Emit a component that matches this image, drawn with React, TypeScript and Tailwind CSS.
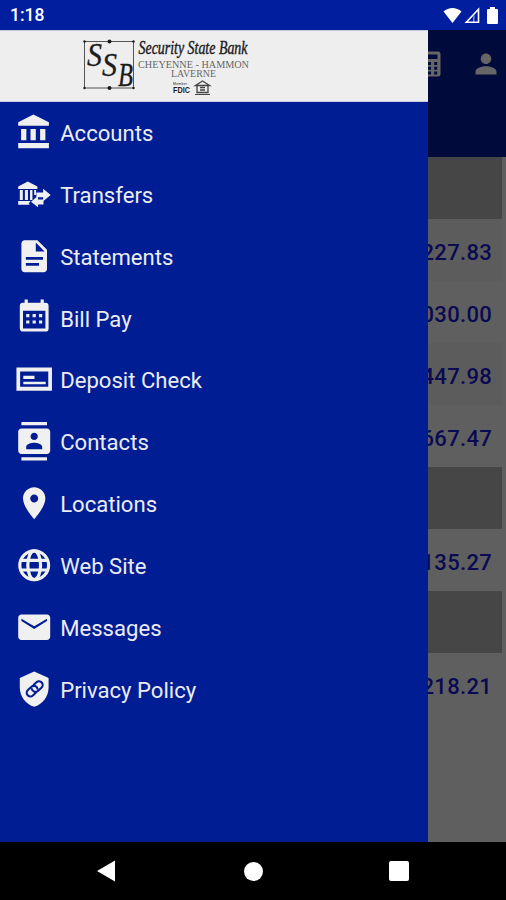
import React from 'react';

const icons: Record<string, React.ReactNode> = {
  accounts: (
    <path d="M3.800 10v7h3.300v-7H3.800zm5.900 0v7h3.300v-7H9.700zM2 22h19.200v-3.200H2V22zm13.700-12v7H19v-7h-3.300zM11.500 1L2 5.800V8h19.200V5.800L11.500 1z" />
  ),
  transfers: (
    <>
      <path d="M8 4L2 7.200v1.500h12V7.200L8 4zM3 9.300v6.400h1.900V9.300zM6.200 9.300v6.400h1.900V9.300zM9.400 9.300v6.400h1.500V9.300zM12 9.300v3.200h1.200V9.300zM2 16.200v2.400h7.200l-.6-.9 1.200-1.500z" />
      <path d="M17.600 8.600l4.700 3.900-4.700 3.900v-2.500h-4.200V11h4.200z" />
      <path d="M14.400 13v2.300h3.400v3.200h-3.400v1.700L10 16.800z" />
    </>
  ),
  statements: (
    <path d="M14 2H6c-1.100 0-1.990.9-1.990 2L4 20c0 1.100.89 2 1.990 2H18c1.100 0 2-.9 2-2V8l-6-6zm1 16H6.800v-1.700H15v1.700zm2.500-3.800H6.800v-1.700h10.700v1.700zM13 9V3.500L18.500 9H13z" />
  ),
  billPay: (
    <path d="M9 10v2H7v-2h2m4 0v2h-2v-2h2m4 0v2h-2v-2h2m2-7a2 2 0 0 1 2 2v14a2 2 0 0 1-2 2H5c-1.110 0-2-.9-2-2V5a2 2 0 0 1 2-2h1V1h2v2h8V1h2v2h1m0 16V8H5v11h14M9 14v2H7v-2h2m4 0v2h-2v-2h2m4 0v2h-2v-2h2z" />
  ),
  deposit: (
    <path
      fillRule="evenodd"
      d="M.9 4.700h22.200v14.500H.9zM3.200 7.200v9.500h17.600V7.200zM5.200 9.900h7v2h-7zM5.200 13.600h14v1.600h-14z"
    />
  ),
  contacts: (
    <path d="M20 0H4v2h16V0zM4 24h16v-2H4v2zM20 4H4c-1.100 0-2 .9-2 2v12c0 1.100.9 2 2 2h16c1.100 0 2-.9 2-2V6c0-1.100-.9-2-2-2zm-8 2.750c1.240 0 2.250 1.010 2.250 2.250s-1.010 2.250-2.250 2.250S9.750 10.240 9.750 9 10.760 6.750 12 6.750zM17 17H7v-1.500c0-1.670 3.330-2.500 5-2.500s5 .830 5 2.500V17z" />
  ),
  locations: (
    <path d="M12 2C8.130 2 5 5.130 5 9c0 5.250 7 13 7 13s7-7.750 7-13c0-3.870-3.130-7-7-7zm0 9.500c-1.380 0-2.500-1.120-2.500-2.500s1.120-2.500 2.500-2.500 2.500 1.120 2.500 2.500-1.120 2.500-2.500 2.500z" />
  ),
  web: (
    <g fill="none" stroke="currentColor" strokeWidth="2">
      <circle cx="12" cy="12" r="9" />
      <ellipse cx="12" cy="12" rx="4" ry="9" />
      <path d="M3.500 9h17M3.500 15h17" />
    </g>
  ),
  messages: (
    <path d="M20 4H4c-1.100 0-1.990.9-1.990 2L2 18c0 1.100.9 2 2 2h16c1.100 0 2-.9 2-2V6c0-1.100-.9-2-2-2zm0 4.200l-8 4.900-8-4.900V6.700l8 4.700 8-4.700v1.500z" />
  ),
  privacy: (
    <>
      <path d="M12 1L3 5v6c0 5.550 3.840 10.740 9 12 5.160-1.260 9-6.450 9-12V5l-9-4z" />
      <g
        fill="none"
        stroke="#001d93"
        strokeWidth="1.300"
        strokeLinecap="round"
        transform="rotate(-42 12.300 11.800)"
      >
        <path d="M11 14.100H8.700a2.300 2.300 0 0 1 0-4.600h3a2.300 2.300 0 0 1 2 3.400" />
        <path d="M13.600 9.500h2.300a2.300 2.300 0 0 1 0 4.600h-3a2.300 2.300 0 0 1-2-3.400" />
      </g>
    </>
  ),
};

const menuItems = [
  { label: 'Accounts', icon: 'accounts' },
  { label: 'Transfers', icon: 'transfers' },
  { label: 'Statements', icon: 'statements' },
  { label: 'Bill Pay', icon: 'billPay' },
  { label: 'Deposit Check', icon: 'deposit' },
  { label: 'Contacts', icon: 'contacts' },
  { label: 'Locations', icon: 'locations' },
  { label: 'Web Site', icon: 'web' },
  { label: 'Messages', icon: 'messages' },
  { label: 'Privacy Policy', icon: 'privacy' },
];

// null is a group heading
const rows: (string | null)[] = [
  null,
  '227.83',
  '030.00',
  '447.98',
  '667.47',
  null,
  '135.27',
  null,
  '218.21',
];

function StatusBar() {
  return (
    <div className="flex h-[30px] shrink-0 items-center justify-between bg-[#001e9e] pl-[10px] pr-2 text-white">
      <span className="pt-[2px] text-[17.5px] font-medium leading-none">1:18</span>
      <div className="flex items-center">
        <svg className="mr-[2px] h-[17px] w-[19px]" viewBox="0 0 18 17" fill="currentColor">
          <path d="M0 4.500C5-.2 13-.2 18 4.500L9 16z" />
        </svg>
        <svg className="mr-[7px] h-[17px] w-4" viewBox="0 0 16 17">
          <path d="M2.300 15.200L14.500 2.300v12.900z" fill="none" stroke="currentColor" strokeWidth="1.600" />
          <path d="M9 15.500v-6L10.500 8v7.500z" fill="currentColor" opacity=".5" />
        </svg>
        <svg className="h-[17px] w-[11px]" viewBox="0 0 11 17" fill="currentColor">
          <path d="M3 0h5v2h2q1 0 1 1v13q0 1-1 1H1q-1 0-1-1V3q0-1 1-1h2z" />
        </svg>
      </div>
    </div>
  );
}

function BankLogo() {
  return (
    <svg
      className="ml-[82px] h-[68px] w-[170px] overflow-visible"
      viewBox="0 -6 170 68"
      fontFamily="Liberation Serif, serif"
      fill="#1c1c1c"
    >
      <rect x="2.500" y="3.500" width="49" height="46.500" fill="none" stroke="#555" strokeWidth="1" />
      <g>
        <circle cx="2.500" cy="3.500" r="1.200" />
        <circle cx="51.500" cy="3.500" r="1.200" />
        <circle cx="2.500" cy="50" r="1.200" />
        <circle cx="51.500" cy="50" r="1.200" />
        <circle cx="27.500" cy="3.500" r="2" />
        <circle cx="27.500" cy="50" r="2" />
      </g>
      <g fontSize="33" fontStyle="italic" stroke="#1c1c1c" strokeWidth=".3">
        <text x="5" y="27.500" textLength="15" lengthAdjust="spacingAndGlyphs">S</text>
        <text x="20" y="37.500" textLength="15" lengthAdjust="spacingAndGlyphs">S</text>
        <text x="36" y="47.500" textLength="15" lengthAdjust="spacingAndGlyphs">B</text>
      </g>
      <text x="56.500" y="16" fontSize="18" fontStyle="italic" stroke="#1c1c1c" strokeWidth=".4" textLength="109" lengthAdjust="spacingAndGlyphs">
        Security State Bank
      </text>
      <text x="56" y="30" fontSize="9.500" fill="#666" textLength="111" lengthAdjust="spacingAndGlyphs">
        CHEYENNE - HAMMON
      </text>
      <text x="89" y="39" fontSize="9.500" fill="#666" textLength="45" lengthAdjust="spacingAndGlyphs">
        LAVERNE
      </text>
      <text x="91" y="47" fontSize="3.500" fontFamily="Liberation Sans, sans-serif" textLength="14">Member</text>
      <text x="91" y="54.500" fontSize="9" fontWeight="bold" fontFamily="Liberation Sans, sans-serif" textLength="17" lengthAdjust="spacingAndGlyphs">
        FDIC
      </text>
      <g fill="none" stroke="#444">
        <path d="M113.500 47.500L120.500 43l7 4.500z" strokeWidth="1.400" />
        <path d="M115 48v6.500h11V48M118 49.500h5M118 52h5" strokeWidth="1.300" />
        <path d="M113 56.500h15" strokeWidth="1" />
      </g>
    </svg>
  );
}

function Drawer() {
  return (
    <aside className="absolute inset-y-0 left-0 w-[428px] bg-[#001d93]">
      <div className="h-[72px] border-b border-t border-[#c8c8e0] bg-[#eee] pt-px">
        <BankLogo />
      </div>
      <nav>
        {menuItems.map((item) => (
          <a key={item.label} className="flex h-[61.9px] items-center pl-[14.800px] text-[#ececf4]">
            <svg className="h-[38.400px] w-[38.400px] -translate-y-px text-[#f0f0f0]" viewBox="0 0 24 24" fill="currentColor">
              {icons[item.icon]}
            </svg>
            <span className="ml-[7px] text-[22.100px] leading-none">{item.label}</span>
          </a>
        ))}
      </nav>
    </aside>
  );
}

function AccountsScreen() {
  return (
    <main className="flex h-full flex-col bg-[#5f5f5f]">
      <header className="flex h-[127px] shrink-0 justify-end bg-[#000b3b] pr-[6px] pt-[20px] text-[#666]">
        <svg className="mr-[28px] h-7 w-7" viewBox="0 0 28 28" fill="currentColor">
          <path
            fillRule="evenodd"
            d="M5.500 1.500h16.500a2.500 2.500 0 0 1 2.500 2.500v20a2.500 2.500 0 0 1-2.500 2.500H5.500A2.500 2.500 0 0 1 3 24V4a2.500 2.500 0 0 1 2.500-2.500zM6 4.500v4.500h15.500V4.500zM6 12v3h3v-3zM12 12v3h3v-3zM18.200 12v3h3v-3zM6 16.800v3h3v-3zM12 16.800v3h3v-3zM18.200 16.800v3h3v-3zM6 21.600v3h3v-3zM12 21.600v3h3v-3zM18.200 21.600v3h3v-3z"
          />
        </svg>
        <svg className="h-7 w-7" viewBox="0 0 24 24" fill="currentColor">
          <path d="M12 12c2.500 0 4.500-2 4.500-4.500S14.500 3 12 3 7.500 5 7.500 7.500 9.500 12 12 12zm0 2c-3 0-9 1.500-9 4.500V21h18v-2.500c0-3-6-4.500-9-4.500z" />
        </svg>
      </header>
      <div className="mr-1">
        {rows.map((amount, i) =>
          amount === null ? (
            <div key={i} className="h-[62px] bg-[#464646]" />
          ) : (
            <div
              key={i}
              className={`flex h-[62px] items-center justify-end pr-[10px] pt-1 text-[22px] font-medium tracking-[0.3px] text-[#0a0a52] ${i % 2 ? 'bg-[#5c5c5c]' : ''}`}
            >
              {amount}
            </div>
          )
        )}
      </div>
    </main>
  );
}

function NavigationBar() {
  return (
    <div className="flex h-[58px] shrink-0 items-center justify-between bg-black pl-[97px] pr-[97px] text-white">
      <svg className="h-[22px] w-[19px]" viewBox="0 0 19 22" fill="currentColor">
        <path d="M0 11L18 .5v21z" />
      </svg>
      <div className="h-[19px] w-[19px] translate-x-px rounded-full bg-white" />
      <div className="h-5 w-5 rounded-[2px] bg-white" />
    </div>
  );
}

export default function App() {
  return (
    <div className="flex h-[900px] w-[506px] flex-col overflow-hidden font-[Roboto,sans-serif]">
      <StatusBar />
      <div className="relative h-[812px] shrink-0 overflow-hidden">
        <AccountsScreen />
        <Drawer />
      </div>
      <NavigationBar />
    </div>
  );
}
